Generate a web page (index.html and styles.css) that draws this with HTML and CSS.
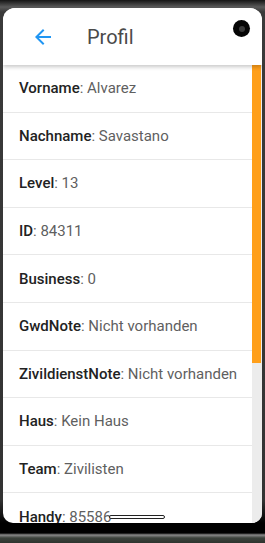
FILE: index.html
```html
<!DOCTYPE html>
<html lang="de">
<head>
  <meta charset="UTF-8" />
  <meta name="viewport" content="width=device-width, initial-scale=1.0" />
  <title>Profil</title>
  <link rel="stylesheet" href="styles.css">
</head>
<body>
  <div class="phone">
    <div class="screen">
      <div class="app-bar">
        <svg class="back" width="24" height="24" viewBox="0 0 24 24">
          <path d="M20 11H7.83l5.59-5.59L12 4l-8 8 8 8 1.41-1.41L7.83 13H20v-2z" fill="#2196f3"/>
        </svg>
        <div class="title">Profil</div>
      </div>

      <div class="content">
        <div class="list">
          <div class="row"><b>Vorname</b>: Alvarez</div>
          <div class="row"><b>Nachname</b>: Savastano</div>
          <div class="row"><b>Level</b>: 13</div>
          <div class="row"><b>ID</b>: 84311</div>
          <div class="row"><b>Business</b>: 0</div>
          <div class="row"><b>GwdNote</b>: Nicht vorhanden</div>
          <div class="row"><b>ZivildienstNote</b>: Nicht vorhanden</div>
          <div class="row"><b>Haus</b>: Kein Haus</div>
          <div class="row"><b>Team</b>: Zivilisten</div>
          <div class="row"><b>Handy</b>: 85586</div>
        </div>
        <div class="scrollbar">
          <div class="thumb"></div>
        </div>
      </div>

      <!-- overlays from the device frame -->
      <div class="camera"><div class="lens"></div></div>
      <div class="home-bar"></div>
    </div>
  </div>
</body>
</html>
```

FILE: styles.css
```css
body {
  margin: 0;
  background: #2b2b2b;
  font-family: Roboto, "Noto Sans", sans-serif;
}

.phone {
  width: 265px;
  height: 543px;
  box-sizing: border-box;
  padding: 8px 3px 0 3px;
  overflow: hidden;
  background: linear-gradient(to bottom, #151515 0px, #5a5a5a 7px, #3a3a3a 12px, #333 500px, #000 523px, #000 533px, #8a8a8a 535px, #3c423c 538px, #2e332e 543px);
}

.screen {
  position: relative;
  height: 515px;
  background: #fff;
  border-radius: 12px 12px 10px 10px;
  overflow: hidden;
  display: flex;
  flex-direction: column;
}

.app-bar {
  height: 57px;
  flex-shrink: 0;
  display: flex;
  align-items: center;
  padding-left: 28px;
  background: #fff;
  box-shadow: 0 2px 4px rgba(0, 0, 0, 0.22);
  position: relative;
  z-index: 1;
}

.back {
  margin-right: 32px;
}

.title {
  font-size: 20px;
  color: #4a4a4a;
}

.content {
  flex: 1;
  display: flex;
  min-height: 0;
}

.list {
  flex: 1;
}

.row {
  box-sizing: border-box;
  height: 47.6px;
  border-bottom: 1px solid #e8e8e8;
  display: flex;
  align-items: center;
  padding-left: 16px;
  font-size: 15px;
  color: #5f5f5f;
  white-space: nowrap;
}

.row b {
  color: #222;
  font-weight: 500;
}

.scrollbar {
  width: 10px;
  background: #ececec;
}

.thumb {
  width: 9px;
  height: 298px;
  background: #ff9f1a;
}

.camera {
  position: absolute;
  top: 12px;
  right: 12px;
  width: 17px;
  height: 17px;
  border-radius: 50%;
  background: #050505;
  z-index: 2;
  display: flex;
  align-items: center;
  justify-content: center;
}

.lens {
  width: 6px;
  height: 6px;
  border-radius: 50%;
  background: #3a3a3a;
}

.home-bar {
  position: absolute;
  left: 106px;
  bottom: 4px;
  width: 54px;
  height: 2px;
  border: 1px solid #222;
  border-radius: 2px;
  background: #fff;
}
```
